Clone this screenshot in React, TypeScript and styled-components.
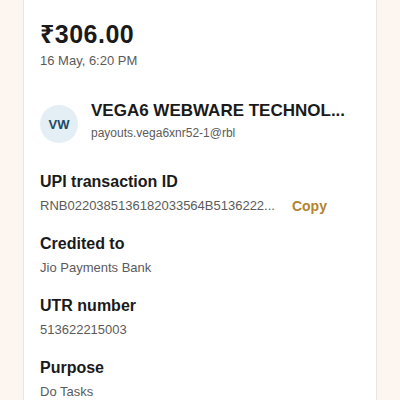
import React from 'react';
import styled, { createGlobalStyle } from 'styled-components';

const GlobalStyle = createGlobalStyle`
  html, body {
    margin: 0;
    padding: 0;
    background: #fdf5ef;
    font-family: "Liberation Sans", Arial, "Noto Sans", sans-serif;
    -webkit-font-smoothing: antialiased;
  }
`;

const Page = styled.div`
  width: 400px;
  height: 400px;
  overflow: hidden;
  background: #fdf5ef;
`;

const Card = styled.div`
  margin: 0 23px;
  min-height: 420px;
  background: #ffffff;
  border-left: 1px solid #ebe4df;
  border-right: 1px solid #ebe4df;
  padding: 19px 16px 0 16px;
  box-sizing: border-box;
`;

const Amount = styled.div`
  font-size: 25px;
  font-weight: 700;
  line-height: 30px;
  height: 30px;
  color: #1a1a1a;
  letter-spacing: 0.5px;
`;

const DateText = styled.div`
  margin-top: 4px;
  font-size: 13px;
  line-height: 16px;
  color: #5b5b5b;
`;

const Payee = styled.div`
  display: flex;
  align-items: flex-start;
  gap: 13px;
  margin-top: 32px;
`;

const Avatar = styled.div`
  width: 38px;
  height: 38px;
  margin-top: 4px;
  border-radius: 50%;
  background: #e4eef5;
  color: #1d4a6b;
  font-size: 13px;
  font-weight: 700;
  display: flex;
  align-items: center;
  justify-content: center;
  flex-shrink: 0;
`;

const PayeeText = styled.div`
  display: flex;
  flex-direction: column;
  gap: 5px;
`;

const PayeeName = styled.div`
  font-size: 17px;
  font-weight: 700;
  line-height: 20px;
  color: #1a1a1a;
  white-space: nowrap;
`;

const PayeeVpa = styled.div`
  font-size: 12px;
  line-height: 14px;
  color: #5b5b5b;
`;

const Section = styled.div<{ $first?: boolean }>`
  margin-top: ${(p) => (p.$first ? '29px' : '20px')};
`;

const Label = styled.div`
  font-size: 16px;
  font-weight: 700;
  line-height: 20px;
  color: #1a1a1a;
`;

const ValueRow = styled.div`
  display: flex;
  align-items: center;
  gap: 17px;
  margin-top: 6px;
  height: 16px;
`;

const Value = styled.div`
  font-size: 13px;
  line-height: 16px;
  color: #5b5b5b;
  white-space: nowrap;
`;

const CopyButton = styled.button`
  border: none;
  background: none;
  padding: 0;
  font-family: inherit;
  font-size: 14px;
  line-height: 16px;
  font-weight: 700;
  color: #b3842d;
  cursor: pointer;
`;

const details = [
  { label: 'UPI transaction ID', value: 'RNB0220385136182033564B5136222...', copy: true },
  { label: 'Credited to', value: 'Jio Payments Bank' },
  { label: 'UTR number', value: '513622215003' },
  { label: 'Purpose', value: 'Do Tasks' },
];

export default function App() {
  return (
    <Page>
      <GlobalStyle />
      <Card>
        <Amount>₹306.00</Amount>
        <DateText>16 May, 6:20 PM</DateText>
        <Payee>
          <Avatar>VW</Avatar>
          <PayeeText>
            <PayeeName>VEGA6 WEBWARE TECHNOL...</PayeeName>
            <PayeeVpa>payouts.vega6xnr52-1@rbl</PayeeVpa>
          </PayeeText>
        </Payee>
        {details.map((d, i) => (
          <Section key={d.label} $first={i === 0}>
            <Label>{d.label}</Label>
            <ValueRow>
              <Value>{d.value}</Value>
              {d.copy && <CopyButton>Copy</CopyButton>}
            </ValueRow>
          </Section>
        ))}
      </Card>
    </Page>
  );
}
